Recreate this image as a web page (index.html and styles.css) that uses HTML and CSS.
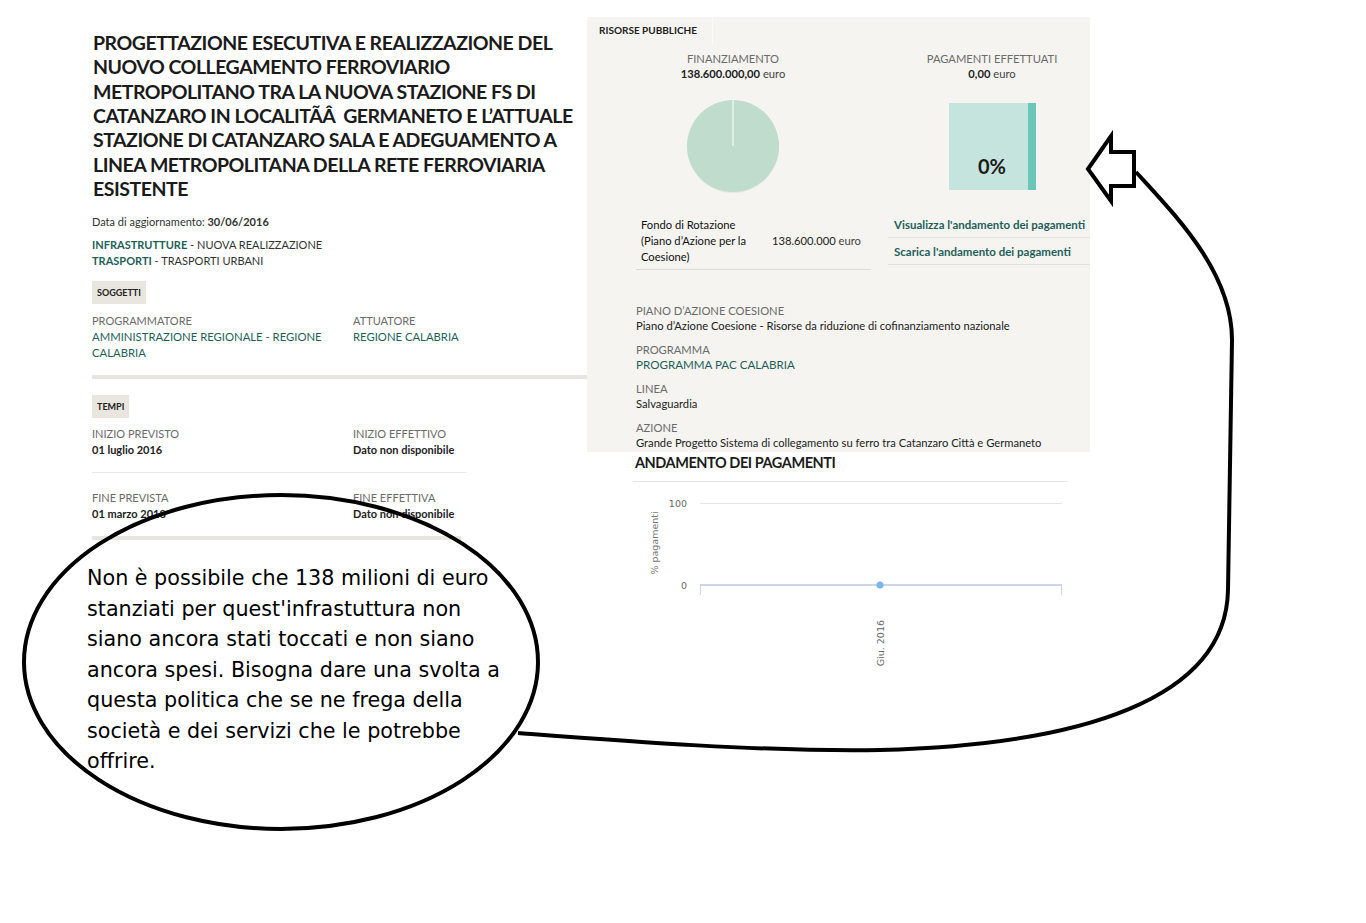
FILE: index.html
```html
<!DOCTYPE html>
<html lang="it">
<head>
<meta charset="utf-8">
<title>Progetto</title>
<link rel="stylesheet" href="styles.css">
</head>
<body>
<div class="page">
  <section class="left">
    <h1 class="title">PROGETTAZIONE ESECUTIVA E REALIZZAZIONE DEL<br>NUOVO COLLEGAMENTO FERROVIARIO<br>METROPOLITANO TRA LA NUOVA STAZIONE FS DI<br>CATANZARO IN LOCALITÃÂ&nbsp; GERMANETO E L’ATTUALE<br>STAZIONE DI CATANZARO SALA E ADEGUAMENTO A<br>LINEA METROPOLITANA DELLA RETE FERROVIARIA<br>ESISTENTE</h1>
    <p class="update">Data di aggiornamento: <b>30/06/2016</b></p>
    <p class="cat"><span class="link">INFRASTRUTTURE</span> - NUOVA REALIZZAZIONE<br><span class="link">TRASPORTI</span> - TRASPORTI URBANI</p>
    <div class="soggetti">
      <div class="badge">SOGGETTI</div>
      <div class="pair first">
        <div><div class="lbl">PROGRAMMATORE</div><div class="val link">AMMINISTRAZIONE REGIONALE - REGIONE CALABRIA</div></div>
        <div><div class="lbl">ATTUATORE</div><div class="val link">REGIONE CALABRIA</div></div>
      </div>
    </div>
    <div class="tempi">
      <div class="badge badge-tempi">TEMPI</div>
      <div class="pair row thin">
        <div><div class="lbl">INIZIO PREVISTO</div><div class="val strong">01 luglio 2016</div></div>
        <div><div class="lbl">INIZIO EFFETTIVO</div><div class="val strong">Dato non disponibile</div></div>
      </div>
      <div class="pair row thick">
        <div><div class="lbl">FINE PREVISTA</div><div class="val strong">01 marzo 2018</div></div>
        <div><div class="lbl">FINE EFFETTIVA</div><div class="val strong">Dato non disponibile</div></div>
      </div>
    </div>
  </section>

  <section class="right">
    <div class="panel">
      <div class="tab">RISORSE PUBBLICHE</div>
      <div class="fin-top">
        <div class="fin-col">
          <div class="head">
            <div class="lbl">FINANZIAMENTO</div>
            <div class="amount"><b>138.600.000,00</b> euro</div>
          </div>
          <svg class="pie" width="96" height="96" viewBox="0 0 96 96">
            <circle cx="48" cy="49" r="46" fill="#e6e9e3"/>
            <circle cx="48" cy="48" r="46" fill="#bfdccc"/>
            <line x1="48" y1="48" x2="48" y2="2" stroke="#ffffff" stroke-width="1"/>
          </svg>
        </div>
        <div class="fin-col pay-col">
          <div class="head">
            <div class="lbl">PAGAMENTI EFFETTUATI</div>
            <div class="amount"><b>0,00</b> euro</div>
          </div>
          <div class="paybox"><span class="pct">0%</span></div>
        </div>
      </div>
      <div class="fin-bottom">
        <div class="fondo-wrap">
          <div class="fondo">
            <div class="fondo-name">Fondo di Rotazione<br>(Piano d’Azione per la<br>Coesione)</div>
            <div class="fondo-amt"><b>138.600.000</b> euro</div>
          </div>
        </div>
        <div class="links">
          <div class="linkrow link">Visualizza l'andamento dei pagamenti</div>
          <div class="linkrow link">Scarica l'andamento dei pagamenti</div>
        </div>
      </div>
      <dl class="info">
        <dt>PIANO D’AZIONE COESIONE</dt>
        <dd>Piano d’Azione Coesione - Risorse da riduzione di cofinanziamento nazionale</dd>
        <dt>PROGRAMMA</dt>
        <dd class="link">PROGRAMMA PAC CALABRIA</dd>
        <dt>LINEA</dt>
        <dd>Salvaguardia</dd>
        <dt>AZIONE</dt>
        <dd>Grande Progetto Sistema di collegamento su ferro tra Catanzaro Città e Germaneto</dd>
      </dl>
    </div>
    <div class="chart">
      <h2 class="chart-title">ANDAMENTO DEI PAGAMENTI</h2>
      <svg class="plot" width="435" height="200" viewBox="0 0 435 200">
        <line x1="67" y1="21.5" x2="429" y2="21.5" stroke="#e6e6e6" stroke-width="1"/>
        <text x="54" y="25" text-anchor="end" class="axis">100</text>
        <text x="54" y="107" text-anchor="end" class="axis">0</text>
        <line x1="67" y1="103" x2="429" y2="103" stroke="#ccd6eb" stroke-width="2"/>
        <line x1="67.5" y1="103" x2="67.5" y2="113" stroke="#ccd6eb" stroke-width="1"/>
        <line x1="428.5" y1="103" x2="428.5" y2="113" stroke="#ccd6eb" stroke-width="1"/>
        <circle cx="247" cy="103" r="3.5" fill="#7cb5ec"/>
        <text x="25" y="61" text-anchor="middle" transform="rotate(-90 25 61)" class="axis-title">% pagamenti</text>
        <text x="251" y="138" text-anchor="end" transform="rotate(-90 251 138)" class="axis">Giu. 2016</text>
      </svg>
    </div>
  </section>
</div>

<svg class="annot" width="1366" height="923" viewBox="0 0 1366 923">
  <ellipse cx="281" cy="662" rx="257" ry="167" fill="none" stroke="#000" stroke-width="4"/>
  <path d="M1136,172 C1176,216 1232,272 1232,340 L1228,590 C1226,700 1080,745 880,750 C760,752 610,740 518,733" fill="none" stroke="#000" stroke-width="4"/>
  <polygon points="1088,169 1111,136 1111,152 1134,152 1134,186 1111,186 1111,201" fill="#fff" stroke="#000" stroke-width="4" stroke-linejoin="miter"/>
</svg>
<div class="note">Non è possibile che 138 milioni di euro<br>stanziati per quest'infrastuttura non<br>siano ancora stati toccati e non siano<br>ancora spesi. Bisogna dare una svolta a<br>questa politica che se ne frega della<br>società e dei servizi che le potrebbe<br>offrire.</div>
</body>
</html>
```

FILE: styles.css
```css
html, body {
  margin: 0;
  padding: 0;
}
body {
  width: 1366px;
  height: 923px;
  position: relative;
  overflow: hidden;
  background: #ffffff;
  font-family: Lato, "Open Sans", sans-serif;
  color: #222222;
}
.page {
  display: flex;
  padding: 17px 0 0 92px;
}
.left {
  width: 495px;
  padding-top: 14px;
}
.title {
  margin: 0 0 0 1px;
  font-size: 19.5px;
  letter-spacing: -0.48px;
  line-height: 24.33px;
  font-weight: 700;
  color: #1b1b1b;
  white-space: nowrap;
}
.update, .cat {
  margin: 13px 0 0;
  font-size: 11px;
  line-height: 16px;
  color: #333;
}
.cat { margin-top: 7px; }
.link { color: #1f5f5a; }
.cat .link { font-weight: 700; }
.badge {
  width: fit-content;
  margin-top: 12px;
  height: 23px;
  line-height: 23px;
  padding: 0 5px;
  background: #e8e6df;
  font-size: 9px;
  font-weight: 700;
  color: #222;
}
.badge-tempi { margin-top: 16px; }
.pair {
  display: grid;
  grid-template-columns: 261px 1fr;
  font-size: 11px;
  line-height: 16px;
}
.pair.first { margin-top: 9px; }
.lbl { color: #6b6b6b; }
.val.link { font-weight: 400; font-size: 11.3px; }
.val.strong { font-weight: 700; color: #222; }
.soggetti {
  padding-bottom: 14px;
  border-bottom: 4px solid #e6e5df;
}
.tempi { width: 375px; }
.row.thin {
  padding: 8px 0 14px;
  border-bottom: 1px solid #e8e8e8;
}
.row.thick {
  padding: 17px 0 14px;
  border-bottom: 4px solid #e6e5df;
  margin-right: 6px;
}

/* right column */
.right { width: 503px; }
.panel {
  height: 435px;
  overflow: hidden;
  background: #f5f4f0;
  font-size: 11.2px;
  line-height: 16px;
}
.tab {
  width: 126px;
  height: 28px;
  box-sizing: border-box;
  padding-left: 12px;
  line-height: 26px;
  font-size: 10px;
  font-weight: 700;
  color: #222;
  border-right: 1px solid #fbfbf9;
}
.fin-top {
  display: grid;
  grid-template-columns: 292px 211px;
  height: 147px;
}
.fin-col {
  display: flex;
  flex-direction: column;
  align-items: center;
  padding-top: 6px;
}
.pay-col { padding-left: 15px; }
.head {
  text-align: center;
  line-height: 15px;
}
.amount { color: #444; }
.amount b { color: #222; }
.pie {
  margin-top: 17px;
  display: block;
}
.paybox {
  margin-top: 22px;
  width: 87px;
  height: 87px;
  box-sizing: border-box;
  background: #c6e4de;
  border-right: 8px solid #6ac7b7;
  display: flex;
  align-items: flex-end;
  justify-content: center;
  padding: 0 0 12px 8px;
}
.pct {
  font-size: 20px;
  line-height: 24px;
  font-weight: 700;
  color: #1b1b1b;
}
.fin-bottom {
  display: grid;
  grid-template-columns: 292px 211px;
  margin-top: 19px;
}
.fondo-wrap { padding: 0 8px 0 49px; }
.fondo {
  display: grid;
  grid-template-columns: 131px 1fr;
  align-items: center;
  padding: 6px 0 4px 5px;
  border-bottom: 1px solid #dddcd6;
  color: #111;
}
.fondo-amt { color: #444; }
.fondo-amt b { color: #222; font-weight: 400; }
.links { padding-left: 9px; }
.linkrow {
  padding: 6px 0 4px 6px;
  border-bottom: 1px solid #e2e1dc;
  font-weight: 700;
  font-size: 11.5px;
}
.info {
  margin: 33px 0 0;
  padding-left: 49px;
}
.info dt {
  color: #6b6b6b;
  line-height: 15px;
  margin-top: 8px;
}
.info dt:first-child { margin-top: 0; }
.info dd {
  margin: 0;
  line-height: 16px;
  color: #222;
}
.info dd.link { font-weight: 400; font-size: 11.6px; color: #1f5f5a; }

.chart {
  padding-left: 46px;
  width: 435px;
}
.chart-title {
  margin: 1px 0 0;
  padding: 0 0 8px 2px;
  font-size: 14.5px;
  letter-spacing: -0.45px;
  line-height: 20px;
  font-weight: 700;
  color: #1b1b1b;
  border-bottom: 1px solid #e8e8e8;
}
.plot { display: block; }
.axis {
  font-family: "DejaVu Sans", sans-serif;
  font-size: 9.5px;
  fill: #666666;
}
.axis-title {
  font-family: "DejaVu Sans", sans-serif;
  font-size: 9.5px;
  fill: #777777;
}

/* annotation overlay */
.annot {
  position: absolute;
  left: 0;
  top: 0;
  pointer-events: none;
}
.note {
  position: absolute;
  left: 87px;
  top: 563px;
  font-family: "DejaVu Sans", sans-serif;
  font-size: 20.7px;
  line-height: 30.5px;
  color: #000;
  white-space: nowrap;
}
```
